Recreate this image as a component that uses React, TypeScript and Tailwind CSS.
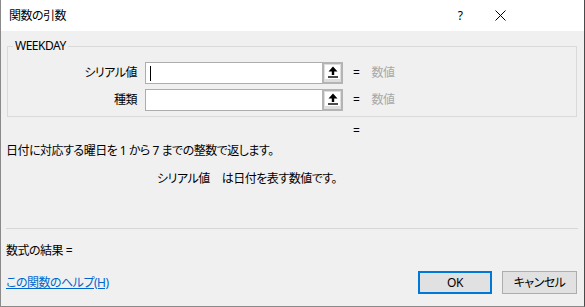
import React from "react";

// Excel "関数の引数" dialog for WEEKDAY

const ARGS = [
  { label: "シリアル値", value: "数値", focused: true },
  { label: "種類", value: "数値", focused: false },
];

function RefIcon() {
  return (
    <svg width="10" height="12" viewBox="0 0 10 12" className="block">
      <path d="M5 0.5 L9.5 5.5 L6.2 5.5 L6.2 9 L3.8 9 L3.8 5.5 L0.5 5.5 Z" fill="#000" />
      <rect x="0" y="10.3" width="10" height="1.4" fill="#000" />
    </svg>
  );
}

function ArgRow({ label, value, focused }: { label: string; value: string; focused: boolean }) {
  return (
    <div className="flex items-center h-[22px]">
      <div className="w-[124px] text-right">{label}</div>
      <div className="ml-[8px] w-[198px] h-[22px] flex border border-[#adadad] bg-white">
        <div className="flex-1 flex items-center pl-[4px]">
          {focused && <span className="w-[1px] h-[15px] bg-black" />}
        </div>
        <div className="w-[21px] -my-[1px] -mr-[1px] border-2 border-[#b4b4b4] bg-[#dedede] flex items-start pl-[1px] pt-[1px]">
          <div className="w-[15px] h-[14px] bg-white flex items-center justify-center">
            <RefIcon />
          </div>
        </div>
      </div>
      <span className="ml-[10px]">=</span>
      <span className="ml-[12px] text-[#a8a8a8]">{value}</span>
    </div>
  );
}

export default function App() {
  return (
    <div
      className="w-[585px] h-[307px] bg-[#f0f0f0] border-l border-b border-[#8a8a8a] border-r-[#4a4a4a] border-r flex flex-col text-[12px] leading-[14px] tracking-[-0.5px] text-black [font-feature-settings:'palt']"
      style={{ fontFamily: '"Noto Sans", "Noto Sans CJK JP", sans-serif' }}
    >
      {/* Title bar */}
      <header className="h-[31px] bg-white flex items-center pl-[8px] shrink-0">
        <span className="flex-1">関数の引数</span>
        <span className="w-[40px] text-center">?</span>
        <span className="w-[40px] flex justify-center mr-[64px]">
          <svg width="11" height="11" viewBox="0 0 11 11">
            <path d="M0.5 0.5 L10.5 10.5 M10.5 0.5 L0.5 10.5" stroke="#000" strokeWidth="1" />
          </svg>
        </span>
      </header>

      {/* Body */}
      <main className="flex-1 flex flex-col pl-[5px] pr-[6px]">
        <fieldset className="mt-[8px] mx-[1px] border border-[#dadada] px-[5px] pt-[9px] pb-[5px] flex flex-col gap-[5px]">
          <legend className="px-[2px] leading-[14px]">WEEKDAY</legend>
          {ARGS.map((a) => (
            <ArgRow key={a.label} {...a} />
          ))}
        </fieldset>

        <div className="mt-[7px] pl-[347px]">=</div>

        <p className="mt-[6px]">日付に対応する曜日を 1 から 7 までの整数で返します。</p>
        <p className="mt-[14px] pl-[151px]">
          シリアル値<span className="ml-[12px]">は日付を表す数値です。</span>
        </p>

        <div className="mt-[42px] h-[1px] bg-[#d7d7d7]" />

        <p className="mt-[15px]">数式の結果 =</p>

        <div className="mt-[13px] flex items-center">
          <a href="#" className="flex-1 text-[#0066cc] underline">
            この関数のヘルプ(H)
          </a>
          <button className="w-[74px] h-[23px] bg-[#e1e1e1] border-2 border-[#0078d7]">OK</button>
          <button className="ml-[10px] mr-[1px] w-[75px] h-[23px] bg-[#e1e1e1] border border-[#adadad]">
            キャンセル
          </button>
        </div>
      </main>
    </div>
  );
}
